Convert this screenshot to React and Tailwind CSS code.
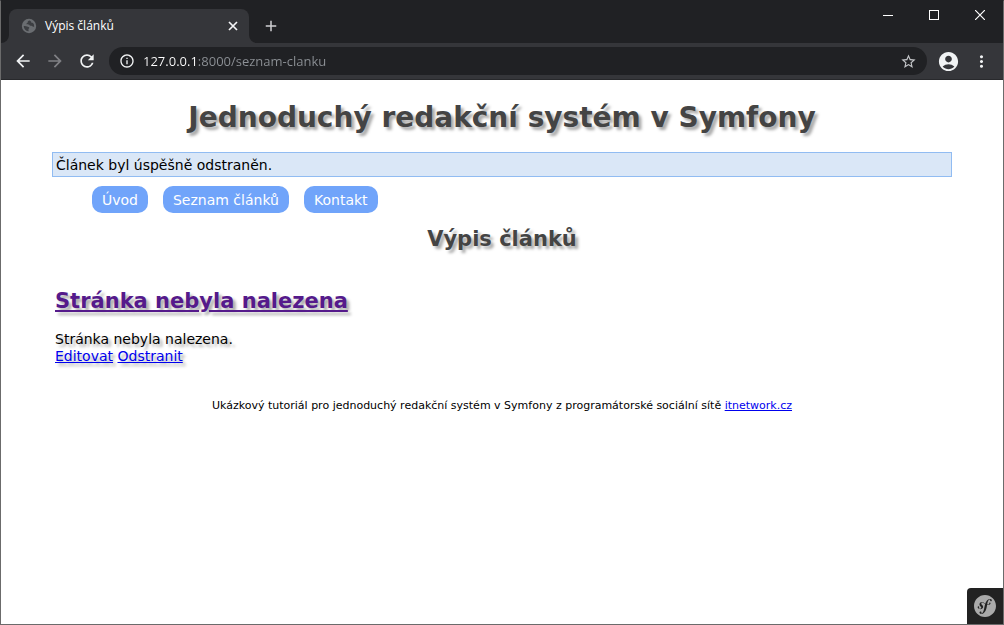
import {
  MdAccountCircle,
  MdAdd,
  MdArrowBack,
  MdArrowForward,
  MdInfoOutline,
  MdMoreVert,
  MdRefresh,
  MdStarBorder,
} from 'react-icons/md';
import { SiSymfony } from 'react-icons/si';

const menu = [
  { label: 'Úvod', href: '#uvod' },
  { label: 'Seznam článků', href: '#seznam-clanku' },
  { label: 'Kontakt', href: '#kontakt' },
];

const articles = [
  {
    url: 'stranka-nebyla-nalezena',
    title: 'Stránka nebyla nalezena',
    description: 'Stránka nebyla nalezena.',
  },
];

function GlobeIcon() {
  return (
    <svg viewBox="0 0 16 16" className="w-4 h-4 shrink-0" aria-hidden="true">
      <circle cx="8" cy="8" r="7.2" fill="#6a6d71" />
      <path
        d="M8.800 2.600c-1.500.2-2.300 1-2.100 1.700.2.700-1.200.8-1.200 1.500 0 .8 1.500.6 2.300.7.800.1.700 1.200 1.600 1.300.9.100 1.400 0 1.900.5.500.6 1 .4 1.900.4a5.400 5.400 0 0 0-1.300-3.900l-1.300.3-.4-1.300z"
        fill="#3c3e42"
      />
      <path
        d="M2.700 8c1.300-.2 2.600 0 3.400.5.900.5 2.100.5 2.200 1.300.1.700-.9.900-.9 1.600 0 .7.300 1.200.4 1.900A5.400 5.400 0 0 1 2.700 8z"
        fill="#3c3e42"
      />
    </svg>
  );
}

function TitleBar() {
  return (
    <div className="flex items-end justify-between h-[43px] bg-[#202124]">
      <div className="flex items-end h-full">
        <svg viewBox="0 0 8 8" className="w-2 h-2" aria-hidden="true">
          <path d="M8 0v8H0a8 8 0 0 0 8-8z" fill="#35363a" />
        </svg>
        <div className="flex items-center w-[240px] h-[34px] pl-3 pr-2 rounded-t-lg bg-[#35363a]">
          <GlobeIcon />
          <span className="grow ml-2 text-[12px] text-white">Výpis článků</span>
          <button type="button" aria-label="Zavřít kartu" className="p-px text-gray-100">
            <svg viewBox="0 0 14 14" className="w-[14px] h-[14px]">
              <path d="M3 3l8 8M11 3l-8 8" stroke="currentColor" strokeWidth="1.7" />
            </svg>
          </button>
        </div>
        <svg viewBox="0 0 8 8" className="w-2 h-2" aria-hidden="true">
          <path d="M0 0v8h8a8 8 0 0 1-8-8z" fill="#35363a" />
        </svg>
        <button type="button" aria-label="Nová karta" className="flex items-center justify-center w-7 h-[34px] text-[#cfd0d2]">
          <MdAdd size={18} />
        </button>
      </div>
      <div className="flex self-start h-[30px] text-white">
        <button type="button" aria-label="Minimalizovat" className="flex items-center justify-center w-[46px]">
          <svg viewBox="0 0 10 10" className="w-[10px] h-[10px]" shapeRendering="crispEdges">
            <path d="M0 5.500h10" stroke="currentColor" />
          </svg>
        </button>
        <button type="button" aria-label="Maximalizovat" className="flex items-center justify-center w-[46px]">
          <svg viewBox="0 0 10 10" className="w-[10px] h-[10px]" shapeRendering="crispEdges">
            <path d="M.5.5h9v9h-9z" fill="none" stroke="currentColor" />
          </svg>
        </button>
        <button type="button" aria-label="Zavřít" className="flex items-center justify-center w-[46px]">
          <svg viewBox="0 0 10 10" className="w-[10px] h-[10px]">
            <path d="M0 0l10 10M10 0L0 10" stroke="currentColor" strokeWidth="1.2" />
          </svg>
        </button>
      </div>
    </div>
  );
}

function Toolbar() {
  return (
    <div className="flex items-center h-[37px] px-3 border-b border-[#28292c] bg-[#35363a] text-[#f1f3f4]">
      <div className="flex items-center gap-3 mr-3">
        <button type="button" aria-label="Zpět">
          <MdArrowBack size={20} />
        </button>
        <button type="button" aria-label="Vpřed" className="text-[#808185]">
          <MdArrowForward size={20} />
        </button>
        <button type="button" aria-label="Načíst znovu">
          <MdRefresh size={20} />
        </button>
      </div>
      <label className="flex items-center grow h-7 px-[10px] rounded-full bg-[#202124]">
        <MdInfoOutline size={16} className="shrink-0" />
        {/* host part is white, the rest of the address is dimmed */}
        <input
          type="text"
          aria-label="Adresa"
          defaultValue="127.0.0.1:8000/seznam-clanku"
          className="grow min-w-0 ml-2 pt-px text-[13px] text-transparent bg-clip-text bg-[linear-gradient(to_right,#ffffff_54px,#8d9196_54px)] outline-none"
        />
        <MdStarBorder size={17} className="shrink-0 text-[#c4c6c9]" />
      </label>
      <button type="button" aria-label="Profil" className="ml-[10px]">
        <MdAccountCircle size={23} />
      </button>
      <button type="button" aria-label="Nabídka" className="ml-3">
        <MdMoreVert size={19} />
      </button>
    </div>
  );
}

function Article({ article }) {
  return (
    <article className="px-[3px] [text-shadow:3px_3px_3px_#aaaaaa]">
      <h2 className="text-[21px] leading-[26px] font-bold">
        <a href={`#${article.url}`} className="text-[#551a8b] underline">{article.title}</a>
      </h2>
      <p className="mt-[17px]">{article.description}</p>
      <p>
        <a href="#editovat" className="text-[#0000ee] underline">Editovat</a>{' '}
        <a href="#odstranit" className="text-[#0000ee] underline">Odstranit</a>
      </p>
    </article>
  );
}

export default function App() {
  return (
    <div className="flex flex-col min-h-screen border border-[#6b6b6b] border-t-[#202124] bg-white">
      <header className="-mt-px font-['Open_Sans','Noto_Sans',sans-serif]">
        <TitleBar />
        <Toolbar />
      </header>

      <div className="w-full max-w-[900px] mx-auto font-['DejaVu_Sans',Verdana,sans-serif] text-[14px] leading-[17px] text-black">
        <h1 className="mt-[21px] text-center text-[28px] leading-[34px] font-bold text-[#444444] [text-shadow:3px_3px_3px_#aaaaaa]">
          Jednoduchý redakční systém v Symfony
        </h1>
        <p className="mt-[17px] px-[3px] pt-1 pb-0.5 border border-[#91bcf2] bg-[#dae7f7]">
          Článek byl úspěšně odstraněn.
        </p>
        <nav className="mt-[9px] pl-10">
          <ul className="flex gap-[15px]">
            {menu.map((item) => (
              <li key={item.label}>
                <a href={item.href} className="block px-[10px] pt-1.5 pb-1 rounded-[10px] bg-[#70a4fa] text-white">
                  {item.label}
                </a>
              </li>
            ))}
          </ul>
        </nav>

        <main>
          <h2 className="mt-[13px] mb-9 text-center text-[21px] leading-[26px] font-bold text-[#444444] [text-shadow:3px_3px_3px_#aaaaaa]">
            Výpis článků
          </h2>
          {articles.map((article) => (
            <Article key={article.url} article={article} />
          ))}
        </main>

        <footer className="mt-8 text-center text-[11px]">
          Ukázkový tutoriál pro jednoduchý redakční systém v Symfony z programátorské sociální sítě{' '}
          <a href="#itnetwork" className="text-[#0000ee] underline">itnetwork.cz</a>
        </footer>
      </div>

      <button
        type="button"
        aria-label="Symfony Profiler"
        className="flex items-center justify-center w-9 h-9 mt-auto ml-auto rounded-tl-sm bg-[#222222] text-[#aaaaaa]"
      >
        <SiSymfony size={22} />
      </button>
    </div>
  );
}
